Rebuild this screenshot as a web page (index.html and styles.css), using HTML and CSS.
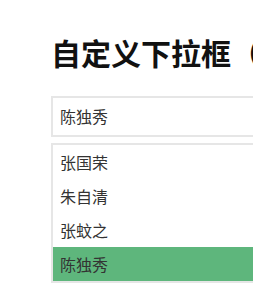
FILE: index.html
```html
<!DOCTYPE html>
<html lang="zh-CN">
  <head>
    <meta charset="UTF-8" />
    <meta name="viewport" content="width=device-width, initial-scale=1.0" />
    <title>自定义下拉框</title>
    <link rel="stylesheet" href="styles.css">
  </head>
  <body>
    <div class="page">
      <h1 class="title">自定义下拉框（模拟select）</h1>

      <div class="select">
        <div class="select-value">陈独秀</div>
        <ul class="select-list">
          <li class="select-item">张国荣</li>
          <li class="select-item">朱自清</li>
          <li class="select-item">张蚊之</li>
          <li class="select-item active">陈独秀</li>
        </ul>
      </div>
    </div>
  </body>
</html>
```

FILE: styles.css
```css
* {
  margin: 0;
  padding: 0;
  box-sizing: border-box;
  font-family: "Noto Sans CJK SC", "Liberation Sans", sans-serif;
}

html,
body {
  overflow: hidden;
}

body {
  background-color: #fff;
  color: #333;
}

.page {
  padding: 34px 0 0 51px;
}

.title {
  font-size: 30px;
  font-weight: 700;
  line-height: 36px;
  color: #111;
  white-space: nowrap;
  margin-bottom: 26px;
}

.select {
  width: 300px;
}

.select-value {
  height: 41px;
  padding: 0 7px;
  border: 2px solid #e6e6e6;
  font-size: 16px;
  line-height: 37px;
}

.select-list {
  list-style: none;
  margin-top: 6px;
  border: 2px solid #e6e6e6;
}

.select-item {
  height: 34px;
  padding: 0 7px;
  font-size: 16px;
  line-height: 34px;
  cursor: pointer;
}

.select-item.active {
  background-color: #5eb67c;
}
```
